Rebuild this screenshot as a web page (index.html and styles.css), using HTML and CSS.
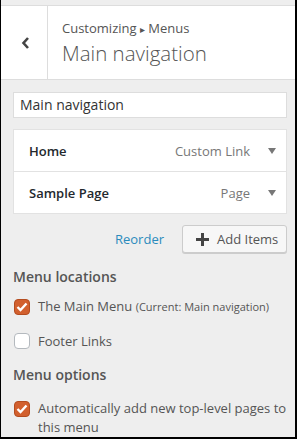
FILE: index.html
```html
<!DOCTYPE html>
<html lang="en">
<head>
    <meta charset="UTF-8">
    <meta name="viewport" content="width=device-width, initial-scale=1.0">
    <title>Customizing Menus</title>
    <link rel="stylesheet" href="styles.css">
</head>
<body>
    <div class="panel">

        <!-- Header -->
        <div class="panel-header">
            <div class="back-button">
                <svg width="10" height="12" viewBox="0 0 10 12">
                    <polyline points="7,1 2.5,6 7,11" fill="none" stroke="#444" stroke-width="2.6"/>
                </svg>
            </div>
            <div class="panel-title">
                <div class="crumb">Customizing <span class="crumb-arrow">&#9656;</span> Menus</div>
                <div class="title">Main navigation</div>
            </div>
        </div>

        <div class="panel-body">
            <!-- Menu name -->
            <div class="name-input">Main navigation</div>

            <!-- Menu items -->
            <div class="menu-items">
                <div class="menu-item">
                    <span class="item-name">Home</span>
                    <span class="item-type">Custom Link</span>
                    <span class="item-arrow"></span>
                </div>
                <div class="menu-item">
                    <span class="item-name">Sample Page</span>
                    <span class="item-type">Page</span>
                    <span class="item-arrow"></span>
                </div>
            </div>

            <div class="actions">
                <span class="reorder">Reorder</span>
                <div class="add-button">
                    <svg width="13" height="13" viewBox="0 0 13 13">
                        <rect x="5" y="0" width="3" height="13" fill="#444"/>
                        <rect x="0" y="5" width="13" height="3" fill="#444"/>
                    </svg>
                    <span>Add Items</span>
                </div>
            </div>

            <!-- Locations -->
            <h3 class="section-title">Menu locations</h3>
            <div class="check-row">
                <span class="checkbox checked">
                    <svg width="12" height="10" viewBox="0 0 12 10"><polyline points="1.5,5 4.5,8 10.5,1.5" fill="none" stroke="#fff" stroke-width="2.4"/></svg>
                </span>
                <span class="check-label">The Main Menu <small>(Current: Main navigation)</small></span>
            </div>
            <div class="check-row second">
                <span class="checkbox"></span>
                <span class="check-label">Footer Links</span>
            </div>

            <!-- Options -->
            <h3 class="section-title options">Menu options</h3>
            <div class="check-row options-row">
                <span class="checkbox checked">
                    <svg width="12" height="10" viewBox="0 0 12 10"><polyline points="1.5,5 4.5,8 10.5,1.5" fill="none" stroke="#fff" stroke-width="2.4"/></svg>
                </span>
                <span class="check-label">Automatically add new top-level pages to this menu</span>
            </div>
        </div>
    </div>
</body>
</html>
```

FILE: styles.css
```css
/* page */
body {
    margin: 0;
    padding: 0;
    font-family: 'Open Sans', 'Noto Sans', sans-serif;
    color: #555;
}

.panel {
    width: 297px;
    height: 439px;
    box-sizing: border-box;
    background-color: #eee;
    border-left: 1px solid #000;
    border-right: 2px solid #000;
    border-bottom: 2px solid #000;
    padding-top: 5px;
    overflow: hidden;
}

/* Header */
.panel-header {
    display: flex;
    background-color: #fff;
    border-top: 1px solid #ddd;
    border-bottom: 1px solid #ddd;
    height: 73px;
}

.back-button {
    width: 47px;
    border-right: 1px solid #ddd;
    display: flex;
    align-items: center;
    justify-content: center;
    padding-left: 3px;
    box-sizing: border-box;
}

.panel-title {
    padding: 13px 0 0 14px;
}

.crumb {
    font-size: 13px;
    line-height: 18px;
    color: #555;
}

.crumb-arrow {
    font-size: 10px;
}

.title {
    margin-top: 2px;
    font-size: 20.5px;
    font-weight: 300;
    line-height: 26px;
    color: #555;
}

/* Body */
.panel-body {
    padding: 12px 8px 0 12px;
}

.name-input {
    height: 26px;
    box-sizing: border-box;
    background-color: #fff;
    border: 1px solid #ddd;
    padding: 0 6px;
    font-size: 14px;
    line-height: 24px;
    color: #333;
}

.menu-items {
    margin-top: 11px;
    background-color: #fff;
    border: 1px solid #e2e2e2;
}

.menu-item {
    display: flex;
    align-items: center;
    height: 41px;
    padding: 0 10px 0 15px;
}

.menu-item + .menu-item {
    border-top: 1px solid #e2e2e2;
}

.item-name {
    flex: 1;
    font-size: 13px;
    font-weight: 600;
    color: #23282d;
}

.item-type {
    font-size: 13px;
    color: #777;
}

.item-arrow {
    margin-left: 18px;
    width: 0;
    height: 0;
    border-left: 4px solid transparent;
    border-right: 4px solid transparent;
    border-top: 6px solid #777;
}

/* Actions */
.actions {
    margin-top: 11px;
    display: flex;
    justify-content: flex-end;
    align-items: center;
}

.reorder {
    font-size: 13px;
    color: #2a8bbd;
    margin-right: 18px;
}

.add-button {
    width: 105px;
    height: 28px;
    box-sizing: border-box;
    display: flex;
    align-items: center;
    padding-left: 13px;
    background-color: #f7f7f7;
    border: 1px solid #ccc;
    border-radius: 3px;
    box-shadow: 0 1px 0 #ccc;
    font-size: 13px;
    color: #555;
}

.add-button svg {
    margin-right: 8px;
}

/* Sections */
.section-title {
    margin: 14px 0 0 0;
    font-size: 14px;
    font-weight: 600;
    line-height: 20px;
    color: #555;
}

.section-title.options {
    margin-top: 14px;
}

.check-row {
    display: flex;
    align-items: center;
    margin-top: 9px;
    padding-left: 1px;
    font-size: 13px;
    line-height: 20px;
}

.check-row.second {
    margin-top: 14px;
}

.check-row.options-row {
    align-items: flex-start;
    margin-top: 14px;
    line-height: 19px;
}

.options-row .checkbox {
    margin-top: 2px;
}

.checkbox {
    flex: none;
    width: 16px;
    height: 16px;
    box-sizing: border-box;
    border: 1px solid #b4b9be;
    border-radius: 4px;
    background-color: #fff;
    margin-right: 8px;
    display: flex;
    align-items: center;
    justify-content: center;
}

.checkbox.checked {
    background-color: #d2602e;
    border-color: #b44c1f;
}

.check-label small {
    font-size: 11px;
}
```
